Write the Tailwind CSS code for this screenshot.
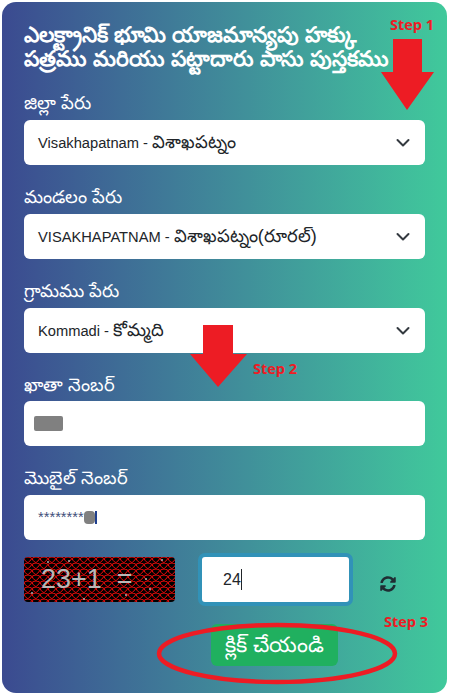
<!DOCTYPE html>
<html lang="te">
<head>
<meta charset="utf-8">
<script src="https://cdn.jsdelivr.net/npm/@tailwindcss/browser@4"></script>
</head>
<body class="bg-white w-[451px] h-[697px] overflow-hidden font-['Liberation_Sans','Noto_Sans',sans-serif]">
<main class="relative w-[445px] h-[691px] mt-[2px] ml-[2px] rounded-[14px] bg-gradient-to-r from-[#3b4a90] to-[#40c99b] pl-[22px] pr-[22px] pt-[21px]">
  <h1 class="text-white text-[21.700px] leading-[24px] font-semibold w-[390px] h-[54px]">ఎలక్ట్రానిక్ భూమి యాజమాన్యపు హక్కు పత్రము మరియు పట్టాదారు పాసు పుస్తకము</h1>

  <div class="mt-[18px] flex flex-col gap-[24px]">
    <div>
      <label class="block text-white text-[18px] leading-[16px] h-[25px] font-medium">జిల్లా పేరు</label>
      <div class="bg-white rounded-[6px] h-[45px] w-[401px] flex items-center justify-between pl-[14px] pr-[15px] text-[#212529] text-[14.700px]">
        <span>Visakhapatnam - <span class="text-[18px] font-light">విశాఖపట్నం</span></span>
        <svg class="w-[14px] h-[10px]" viewBox="0 0 14 10" fill="none" stroke="#343a40" stroke-width="2" stroke-linecap="round" stroke-linejoin="round"><path d="M1.500 2l5.500 5.500L12.500 2"/></svg>
      </div>
    </div>
    <div>
      <label class="block text-white text-[18px] leading-[16px] h-[25px] font-medium">మండలం పేరు</label>
      <div class="bg-white rounded-[6px] h-[45px] w-[401px] flex items-center justify-between pl-[14px] pr-[15px] text-[#212529] text-[14.700px]">
        <span>VISAKHAPATNAM - <span class="text-[18px] font-light">విశాఖపట్నం(రూరల్)</span></span>
        <svg class="w-[14px] h-[10px]" viewBox="0 0 14 10" fill="none" stroke="#343a40" stroke-width="2" stroke-linecap="round" stroke-linejoin="round"><path d="M1.500 2l5.500 5.500L12.500 2"/></svg>
      </div>
    </div>
    <div>
      <label class="block text-white text-[18px] leading-[16px] h-[25px] font-medium">గ్రామము పేరు</label>
      <div class="bg-white rounded-[6px] h-[45px] w-[401px] flex items-center justify-between pl-[14px] pr-[15px] text-[#212529] text-[14.700px]">
        <span>Kommadi - <span class="text-[18px] font-light">కోమ్మది</span></span>
        <svg class="w-[14px] h-[10px]" viewBox="0 0 14 10" fill="none" stroke="#343a40" stroke-width="2" stroke-linecap="round" stroke-linejoin="round"><path d="M1.500 2l5.500 5.500L12.500 2"/></svg>
      </div>
    </div>
    <div>
      <label class="block text-white text-[18px] leading-[16px] h-[24px] font-medium">ఖాతా నెంబర్</label>
      <div class="bg-white rounded-[6px] h-[45px] w-[401px] flex items-center pl-[10px]">
        <span class="block w-[29px] h-[15px] bg-[#808080] rounded-[2px]"></span>
      </div>
    </div>
    <div>
      <label class="block text-white text-[18px] leading-[16px] h-[25px] font-medium">మొబైల్ నెంబర్</label>
      <div class="bg-white rounded-[6px] h-[45px] w-[401px] flex items-center pl-[14px] text-[#3f4f7a] text-[14.700px]">
        <span>********</span><span class="block w-[11px] h-[13px] bg-[#808080] rounded-[4px]"></span><span class="block w-[2px] h-[13px] bg-[#1f3f8f]"></span>
      </div>
    </div>
  </div>

  <div class="mt-[13px] flex items-center h-[53px]">
    <div class="relative w-[151px] h-[45px] rounded-[4px] overflow-hidden bg-black flex items-center">
      <svg class="absolute inset-0 w-full h-full" viewBox="0 0 151 45">
        <defs>
          <pattern id="net" width="8" height="6" patternUnits="userSpaceOnUse">
            <path d="M0 1.500c1.500 3 3 4 4 4s2-2 4-4M0 1.500c1.500-1 2.500-1.500 4-1.500s2.500.5 4 1.500" fill="none" stroke="#ff0a0a" stroke-width="1"/>
          </pattern>
        </defs>
        <rect width="151" height="45" fill="url(#net)"/>
        <g fill="#b0b0b0"><circle cx="24" cy="5" r="1"/><circle cx="138" cy="3" r="1"/><circle cx="122" cy="22" r="1"/><circle cx="8" cy="36" r="1"/><circle cx="60" cy="42" r="1"/><circle cx="102" cy="38" r="1"/><circle cx="45" cy="4" r="1"/><circle cx="126" cy="32" r="1"/></g>
      </svg>
      <span class="relative ml-[17px] text-[#b8b8b8] text-[27px] leading-none whitespace-pre">23+1  =</span>
    </div>
    <div class="ml-[23px] w-[155px] h-[53px] rounded-[7px] border-[4px] border-[#3192b8] bg-white flex items-center pl-[21px] text-[#212529] text-[16px]">
      <span>24</span><span class="block w-px h-[21px] bg-[#212529]"></span>
    </div>
    <svg class="ml-[27px] mt-[8px] w-[16px] h-[16px]" viewBox="0 0 512 512" fill="#1f2d33"><path d="M370.720 133.280C339.458 104.008 298.888 87.962 255.848 88c-77.458.068-144.328 53.178-162.791 126.850-1.344 5.363-6.122 9.150-11.651 9.150H24.103c-7.498 0-13.194-6.807-11.807-14.176C33.933 94.924 134.813 8 256 8c66.448 0 126.791 26.136 171.315 68.685L463.030 40.970C478.149 25.851 504 36.559 504 57.941V192c0 13.255-10.745 24-24 24H345.941c-21.382 0-32.090-25.851-16.971-40.971l41.750-41.749zM32 296h134.059c21.382 0 32.090 25.851 16.971 40.971l-41.750 41.750c31.262 29.273 71.835 45.319 114.876 45.280 77.418-.070 144.315-53.144 162.787-126.849 1.344-5.363 6.122-9.150 11.651-9.150h57.304c7.498 0 13.194 6.807 11.807 14.176C478.067 417.076 377.187 504 256 504c-66.448 0-126.791-26.136-171.315-68.685L48.970 471.030C33.851 486.149 8 475.441 8 454.059V320c0-13.255 10.745-24 24-24z"/></svg>
  </div>

  <div class="mt-[18px] ml-[187px] w-[127px] h-[42px] rounded-[6px] bg-[#20b05f] text-white text-[21.500px] flex items-center justify-center">క్లిక్ చేయండి</div>

  <svg class="absolute left-0 top-0 w-[445px] h-[691px] pointer-events-none" viewBox="0 0 445 691">
    <path fill="#ed1c24" d="M391 37h29v33h12l-27 38-26-38h12z"/>
    <path fill="#ed1c24" d="M201 323h30v29h14l-29 33-28-33h13z"/>
    <ellipse cx="275" cy="651.500" rx="118" ry="28.500" fill="none" stroke="#ed1c24" stroke-width="4.500"/>
  </svg>
  <span class="absolute left-[388px] top-[14px] text-[#ed1c24] text-[14.500px] leading-[18px] font-bold font-['Open_Sans',sans-serif]">Step 1</span>
  <span class="absolute left-[251px] top-[358px] text-[#ed1c24] text-[14.500px] leading-[18px] font-bold font-['Open_Sans',sans-serif]">Step 2</span>
  <span class="absolute left-[382px] top-[611px] text-[#ed1c24] text-[14.500px] leading-[18px] font-bold font-['Open_Sans',sans-serif]">Step 3</span>
</main>
</body>
</html>
